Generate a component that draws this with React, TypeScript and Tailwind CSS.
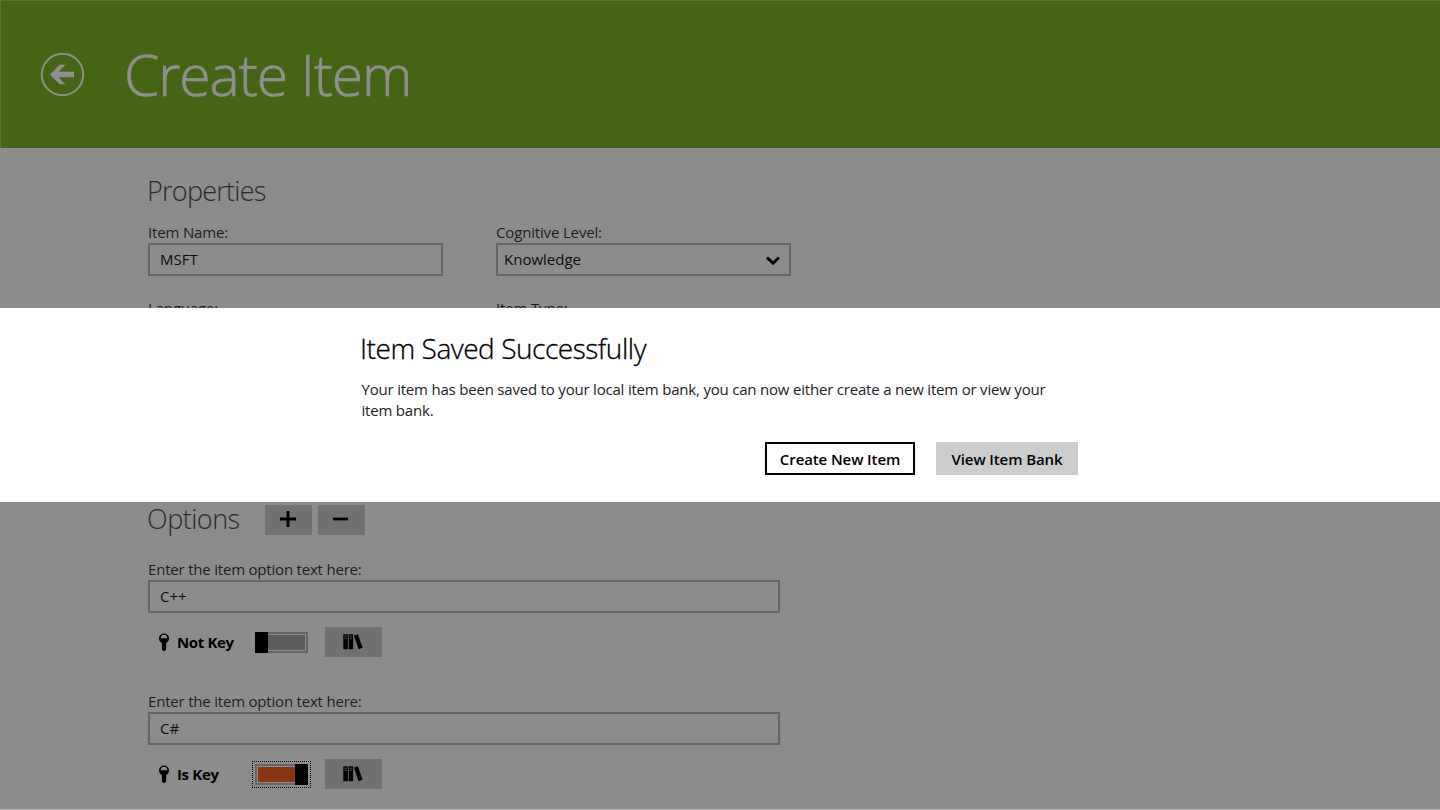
import type { ReactNode } from "react";

interface FieldProps {
  label: string;
  children?: ReactNode;
}

interface ItemOption {
  text: string;
  isKey: boolean;
}

const options: ItemOption[] = [
  { text: "C++", isKey: false },
  { text: "C#", isKey: true },
];

const Field = ({ label, children }: FieldProps) => (
  <div className="w-[295px]">
    <div className="h-5 whitespace-nowrap text-[15px] leading-[19px] tracking-[-0.16px] text-[#1c1c1c]">{label}</div>
    <div className="flex h-[33px] items-center justify-between border-2 border-[#656565] text-[15px] text-[#0c0c0c]">
      {children}
    </div>
  </div>
);

const KeyIcon = () => (
  <svg width="12" height="19" viewBox="0 0 12 19" className="shrink-0">
    <path
      fillRule="evenodd"
      d="M6 0.5a5 5 0 0 1 5 5c0 2.2-1.3 3.8-2.8 4.6v6.3L6.6 18H5.2L3.9 16.6v-6.5C2.3 9.300 1 7.700 1 5.500a5 5 0 0 1 5-5zM2.800 4v1.300h6.400V4L7.800 2h-3.600z"
      fill="#000"
    />
  </svg>
);

const LibraryIcon = () => (
  <svg width="20" height="16" viewBox="0 0 20 16">
    <path d="M0.300 0.300h4.600v15H0.300zM5.700 0.300h4.400v15H5.700zM10.900 1.600l4-1.400 4.700 13.500-4 1.500z" fill="#000" />
    <path d="M1.400 2.200h2.400M1.400 4.300h2.400M6.800 2.200h2.300M6.800 4.300h2.300" stroke="#717171" strokeWidth="0.700" />
  </svg>
);

const Toggle = ({ on }: { on: boolean }) =>
  on ? (
    <div className="flex h-[27px] w-[59px] items-center justify-center border border-dotted border-black">
      <div className="flex h-[21px] w-[53px] justify-end border-2 border-[#656565]">
        <div className="my-px ml-px flex-1 bg-[#873514]" />
        <div className="-my-0.5 -mr-0.5 h-[21px] w-[13px] bg-black" />
      </div>
    </div>
  ) : (
    <div className="ml-[3px] flex h-[21px] w-[53px] border-2 border-[#656565]">
      <div className="-my-0.5 -ml-0.5 h-[21px] w-[13px] bg-black" />
      <div className="my-px mr-px flex-1 bg-[#5c5c5c]" />
    </div>
  );

const OptionRow = ({ text, isKey }: ItemOption) => (
  <div className="h-[132px]">
    <div className="h-5 text-[15px] leading-[19px] tracking-[-0.2px] text-[#1c1c1c]">Enter the item option text here:</div>
    <div className="flex h-[33px] w-[632px] items-center border-2 border-[#656565] pl-2.5 text-[15px] text-[#0c0c0c]">
      {text}
    </div>
    <div className="mt-3.5 flex h-[30px] items-center">
      <div className="flex w-[104px] items-center gap-[7px] pl-2.5">
        <KeyIcon />
        <span className="whitespace-nowrap text-[15px] font-bold tracking-[-0.35px] text-black">
          {isKey ? "Is Key" : "Not Key"}
        </span>
      </div>
      <div className="flex w-[73px]">
        <Toggle on={isKey} />
      </div>
      <button className="mb-px flex h-[30px] w-[57px] items-center justify-center bg-[#717171] pr-0.5">
        <LibraryIcon />
      </button>
    </div>
  </div>
);

const SavedDialog = () => (
  <div className="absolute inset-x-0 top-[308px] h-[194px] bg-white pl-[360px] pt-[23px] text-black">
    <h2 className="h-[35px] whitespace-nowrap text-[28px] font-light leading-[34px] tracking-[-0.45px] [-webkit-text-stroke:0.3px]">
      Item Saved Successfully
    </h2>
    <p className="mt-[13px] w-[720px] whitespace-nowrap pl-[1.5px] text-[15px] leading-[21px] tracking-[-0.2px] text-[#222]">
      Your item has been saved to your local item bank, you can now either create a new item or view your
      <br />
      item bank.
    </p>
    <div className="mt-[21px] flex w-[718px] justify-end gap-[21px] text-[15px] font-semibold tracking-[-0.1px]">
      <button className="h-[33px] w-[150px] whitespace-nowrap border-2 border-black pt-px">Create New Item</button>
      <button className="h-[33px] w-[142px] whitespace-nowrap bg-[#ccc] pt-px">View Item Bank</button>
    </div>
  </div>
);

export default function App() {
  return (
    <div className="relative h-[810px] w-[1440px] overflow-hidden border-b border-[#b5b5b5] bg-[#8c8c8c] font-['Open_Sans','Noto_Sans',sans-serif]">
      <header className="flex h-[148px] items-center border-l border-t border-[#58733a] bg-[#446416] pl-[39px] text-[#8f8f8f]">
        <svg width="45" height="45" viewBox="0 0 45 45" fill="none">
          <circle cx="22.500" cy="22.500" r="20.700" stroke="#8f8f8f" strokeWidth="2" />
          <path d="M10 22.500 19.500 12.800H25.300L18.500 19.800H34V25.200H18.500L25.300 32.200H19.500z" fill="#8f8f8f" />
        </svg>
        <h1 className="ml-[39px] whitespace-nowrap text-[57px] font-light leading-none tracking-[-1.1px] [-webkit-text-stroke:0.7px]">
          Create Item
        </h1>
      </header>
      <main className="pl-[148px]">
        <h2 className="-ml-px h-[75px] pt-[26px] text-[27px] font-light leading-[34px] tracking-[-0.75px] text-[#292929]">
          Properties
        </h2>
        <div className="grid h-[272px] grid-cols-[348px_295px] content-start gap-y-[23px]">
          <Field label="Item Name:">
            <span className="pl-2.5">MSFT</span>
          </Field>
          <Field label="Cognitive Level:">
            <span className="pl-1.5">Knowledge</span>
            <svg width="14" height="10" viewBox="0 0 14 10" className="mr-[9px] mt-0.5">
              <path d="M1 1.500 7 7.300 13 1.500" stroke="#000" strokeWidth="2.800" fill="none" />
            </svg>
          </Field>
          <Field label="Language:" />
          <Field label="Item Type:" />
        </div>
        <div className="flex h-[65px] items-start pt-2.5">
          <h2 className="-ml-px -mt-px w-[118px] text-[27px] font-light leading-[30px] tracking-[-0.5px] text-[#292929]">
            Options
          </h2>
          <button className="mr-1.5 flex h-[30px] w-[47px] items-center justify-center bg-[#717171] pb-0.5 pr-0.5">
            <svg width="16" height="16" viewBox="0 0 16 16">
              <path d="M0 8h16M8 0v16" stroke="#000" strokeWidth="2.800" />
            </svg>
          </button>
          <button className="flex h-[30px] w-[47px] items-center justify-center bg-[#717171] pb-0.5 pr-0.5">
            <svg width="15" height="16" viewBox="0 0 15 16">
              <path d="M0 8h15" stroke="#000" strokeWidth="2.800" />
            </svg>
          </button>
        </div>
        {options.map((option) => (
          <OptionRow key={option.text} {...option} />
        ))}
      </main>
      <SavedDialog />
    </div>
  );
}
